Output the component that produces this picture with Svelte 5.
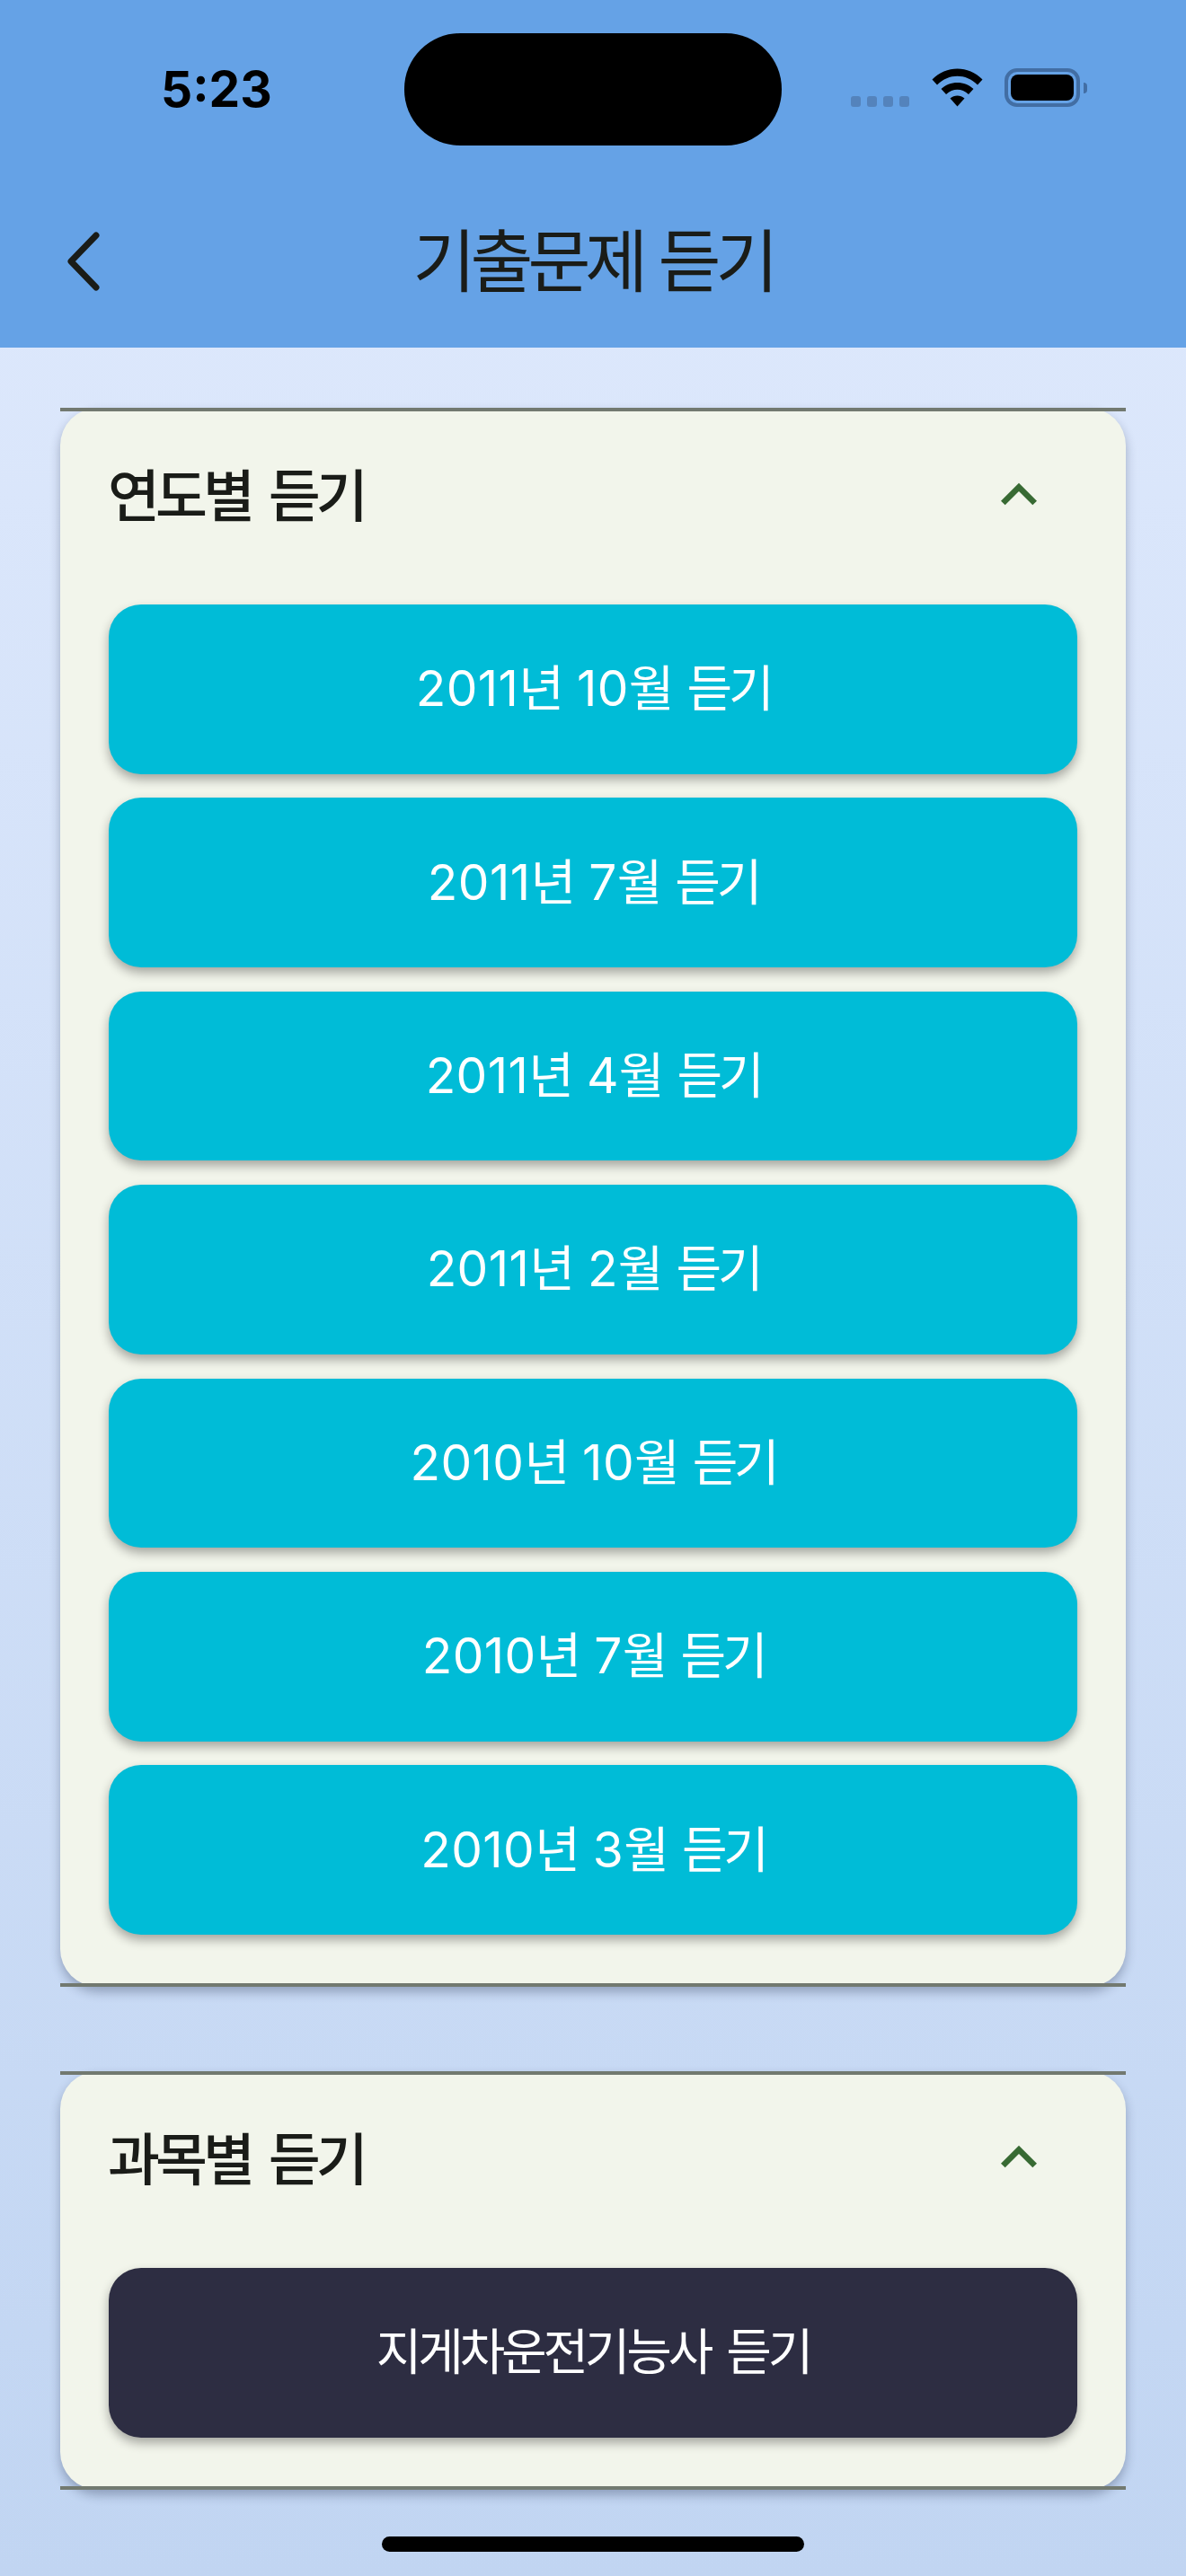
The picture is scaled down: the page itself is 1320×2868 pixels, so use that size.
<script>
  const years = [
    "2011년 10월 듣기",
    "2011년 7월 듣기",
    "2011년 4월 듣기",
    "2011년 2월 듣기",
    "2010년 10월 듣기",
    "2010년 7월 듣기",
    "2010년 3월 듣기"
  ]

  const subjects = ["지게차운전기능사 듣기"]

  const sections = [
    { title: "연도별 듣기", items: years, dark: false },
    { title: "과목별 듣기", items: subjects, dark: true }
  ]

  // digits and hangul need different tracking
  const parts = (label) => label.split(/(\d+)/).filter(Boolean)
</script>

<div class="page">
  <header class="appbar">
    <div class="status">
      <span class="time">5:23</span>
      <span class="island"></span>
      <div class="indicators">
        <span class="dots">
          <i></i><i></i><i></i><i></i>
        </span>
        <svg class="wifi" width="57" height="43" viewBox="0 0 57 43">
          <path d="M0.5 12.5 C16 -3.5 41 -3.5 56.5 12.5 L51 18.5 C38 5.5 19 5.5 6 18.5 Z" fill="#000" />
          <path d="M10.5 23 C20 13.5 37 13.5 46.5 23 L41 29 C33.500 22 23.500 22 16 29 Z" fill="#000" />
          <path d="M20.500 33.500 C25 29.500 32 29.500 36.500 33.500 L28.500 42.500 Z" fill="#000" />
        </svg>
        <span class="battery"><span class="level"></span></span>
        <span class="nub"></span>
      </div>
    </div>
    <div class="toolbar">
      <svg class="back" width="44" height="70" viewBox="0 0 44 70">
        <path d="M37 6 L9 35 L37 64" fill="none" stroke="#1a1c18" stroke-width="7" stroke-linecap="round" stroke-linejoin="round" />
      </svg>
      <h1>기출문제 듣기</h1>
    </div>
  </header>

  <main>
    {#each sections as section}
      <section class="panel">
        <div class="panel-head">
          <h2>{section.title}</h2>
          <svg class="toggle" width="80" height="80" viewBox="0 0 24 24">
            <path d="M12 8l-6 6 1.41 1.41L12 10.83l4.59 4.58L18 14z" fill="#386a33" />
          </svg>
        </div>
        <div class="list">
          {#each section.items as item}
            <button class="listen" class:dark={section.dark}>
              {#each parts(item) as part}
                {#if /\d/.test(part)}<span class="num">{part}</span>{:else}{part}{/if}
              {/each}
            </button>
          {/each}
        </div>
      </section>
    {/each}
    <div class="home"></div>
  </main>
</div>

<style>
  :global(body) {
    margin: 0;
  }

  .page {
    width: 1320px;
    height: 2868px;
    display: flex;
    flex-direction: column;
    overflow: hidden;
    background: linear-gradient(180deg, #e0eafd 0%, #c1d5f2 100%);
    font-family: Inter, "Noto Sans CJK KR", sans-serif;
    color: #1a1c18;
  }

  .appbar {
    height: 387px;
    flex: none;
    background: #65a2e6;
  }

  .status {
    display: grid;
    grid-template-columns: 450px 420px 1fr;
    height: 125px;
    padding-top: 37px;
  }

  .time {
    align-self: center;
    padding-left: 179px;
    font-size: 55px;
    font-weight: 700;
    line-height: 1;
    color: #000;
  }

  .island {
    background: #000;
    border-radius: 62px;
  }

  .indicators {
    display: flex;
    align-items: flex-end;
    align-self: start;
    height: 43px;
    margin-top: 39px;
    padding-left: 77px;
  }

  .dots {
    display: flex;
    gap: 7px;
    margin-right: 25px;
  }

  .dots i {
    width: 11px;
    height: 12px;
    border-radius: 3px;
    background: #5483bc;
  }

  .battery {
    box-sizing: border-box;
    width: 84px;
    height: 43px;
    margin-left: 24px;
    padding: 3px;
    border: 4px solid #426ea4;
    border-radius: 14px;
  }

  .level {
    display: block;
    height: 100%;
    border-radius: 8px;
    background: #000;
  }

  .nub {
    width: 4px;
    height: 12px;
    margin: 0 0 15px 4px;
    border-radius: 0 6px 6px 0;
    background: #426ea4;
  }

  .toolbar {
    display: flex;
    align-items: center;
    position: relative;
    height: 193px;
    padding-top: 32px;
  }

  .back {
    margin-left: 70px;
  }

  h1 {
    position: absolute;
    left: 0;
    right: 0;
    margin: 2px 0 0;
    text-align: center;
    font-size: 76px;
    font-weight: 400;
    letter-spacing: -6px;
    word-spacing: 2px;
    line-height: 1.2;
  }

  main {
    display: flex;
    flex-direction: column;
    align-items: center;
    gap: 94px;
    padding-top: 67px;
  }

  .panel {
    position: relative;
    box-sizing: border-box;
    width: 1186px;
    padding: 4px 54px 58px;
    border-radius: 42px;
    background: #f2f5eb;
    box-shadow: 0 6px 12px rgba(20, 30, 60, 0.3);
  }

  .panel::before,
  .panel::after {
    content: "";
    position: absolute;
    left: 0;
    right: 0;
    height: 4px;
    background: #727970;
  }

  .panel::before {
    top: 0;
  }

  .panel::after {
    bottom: 0;
  }

  .panel-head {
    display: flex;
    align-items: center;
    justify-content: space-between;
    height: 215px;
    padding-bottom: 30px;
    box-sizing: border-box;
  }

  h2 {
    margin: 4px 0 0 -1px;
    font-size: 63px;
    font-weight: 500;
    letter-spacing: -5px;
    word-spacing: 8px;
    line-height: 1.2;
  }

  .toggle {
    margin-right: 25px;
  }

  .list {
    display: flex;
    flex-direction: column;
    gap: 26.8px;
  }

  .listen {
    height: 188.6px;
    padding: 0 0 10px;
    border: 0;
    border-radius: 36px;
    background: #00bcd7;
    box-shadow: 0 6px 12px rgba(0, 0, 0, 0.32);
    font: inherit;
    font-size: 55px;
    letter-spacing: -4.2px;
    word-spacing: 7px;
    color: #fff;
  }

  .listen.dark {
    background: #2d2d42;
  }

  .num {
    letter-spacing: 0.4px;
  }

  .home {
    width: 470px;
    height: 17px;
    margin-top: -41.6px;
    border-radius: 9px;
    background: #000;
  }
</style>
